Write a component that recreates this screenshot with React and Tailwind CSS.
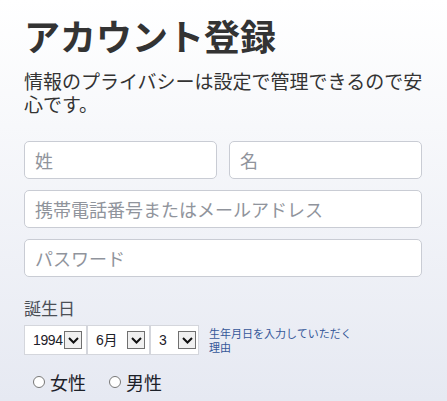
import { useState } from "react";

const jp = { fontFamily: '"Noto Sans CJK JP", "Noto Sans", sans-serif' };

// 日付用の擬似セレクト
const FakeSelect = ({ value, width, textW }) => (
  <div
    className="flex items-center h-[30px] bg-white border border-[#d4d6dc]"
    style={{ width }}
  >
    <span
      className="pl-[8px] text-[14px] tracking-[-0.4px] text-[#1d2129]"
      style={{ width: textW, fontFamily: '"Liberation Sans", "Noto Sans CJK JP", sans-serif' }}
    >
      {value}
    </span>
    <span className="flex items-center justify-center w-[18px] h-[18px] border border-[#707070] bg-[#f0f0f0]">
      <svg width="11" height="7" viewBox="0 0 11 7">
        <path d="M1 1 L5.5 5.5 L10 1" fill="none" stroke="#111" strokeWidth="2" />
      </svg>
    </span>
  </div>
);

const Field = ({ placeholder, className = "" }) => (
  <input
    placeholder={placeholder}
    className={`h-[38px] rounded-[5px] border border-[#c9ccd4] bg-white px-[10px] text-[18px] text-[#1d2129] placeholder:text-[#90949c] outline-none ${className}`}
    style={jp}
  />
);

export default function App() {
  const [gender, setGender] = useState("");

  return (
    <div
      className="w-[447px] h-[401px] overflow-hidden bg-gradient-to-b from-white to-[#e6e9f2] px-[24px] pt-[13px]"
      style={jp}
    >
      <h1 className="text-[36px] leading-[44px] font-bold text-[#333]">アカウント登録</h1>
      <p className="mt-[12px] w-[400px] text-[19px] leading-[23px] text-[#333]">
        情報のプライバシーは設定で管理できるので安心です。
      </p>

      <div className="mt-[26px] flex flex-col gap-[11px] w-[398px]">
        <div className="flex gap-[12px]">
          <Field placeholder="姓" className="w-[193px]" />
          <Field placeholder="名" className="w-[193px]" />
        </div>
        <Field placeholder="携帯電話番号またはメールアドレス" className="w-full" />
        <Field placeholder="パスワード" className="w-full" />
      </div>

      <div className="mt-[20px] text-[17px] leading-[22px] text-[#4b4f56]">誕生日</div>

      <div className="mt-[6px] flex items-center">
        <FakeSelect value="1994" width="63px" textW="39px" />
        <FakeSelect value="6月" width="63px" textW="39px" />
        <FakeSelect value="3" width="49px" textW="27px" />
        <a className="ml-[10px] w-[150px] text-[11px] leading-[14px] text-[#365899]">
          生年月日を入力していただく理由
        </a>
      </div>

      <div className="mt-[16px] flex items-center pl-[9px] text-[18px] leading-[22px] text-[#1d2129]">
        <label className="flex items-center gap-[5px]">
          <input
            type="radio"
            name="sex"
            checked={gender === "f"}
            onChange={() => setGender("f")}
            className="w-[12px] h-[12px] m-0"
          />
          女性
        </label>
        <label className="ml-[23px] flex items-center gap-[5px]">
          <input
            type="radio"
            name="sex"
            checked={gender === "m"}
            onChange={() => setGender("m")}
            className="w-[12px] h-[12px] m-0"
          />
          男性
        </label>
      </div>
    </div>
  );
}
